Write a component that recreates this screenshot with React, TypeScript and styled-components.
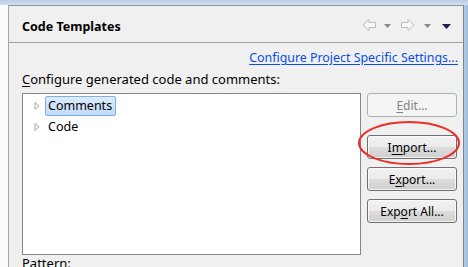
import React from "react";
import styled, { createGlobalStyle } from "styled-components";

const Global = createGlobalStyle`
  html, body { margin: 0; padding: 0; }
  body {
    width: 468px; height: 267px; overflow: hidden;
    font-family: "Segoe UI", "Noto Sans", "Open Sans", sans-serif;
    font-size: 12px; color: #000; background: #fafbfc;
  }
`;

const Frame = styled.div`
  width: 468px; height: 267px; display: flex; flex-direction: column; overflow: hidden;
`;
const TopStrip = styled.div`
  height: 5px; flex: none;
  background: linear-gradient(#b9cde3, #d3e0ee);
`;
const Body = styled.div`
  flex: 1; display: flex; min-height: 0;
`;
const LeftGutter = styled.div`
  width: 8px; flex: none; background: #fbfcfd;
`;
const RightStrip = styled.div`
  width: 4px; flex: none;
  background: linear-gradient(90deg, #b5cce6, #9fbcdc);
`;
const Panel = styled.div`
  flex: 1; display: flex; flex-direction: column; min-height: 0;
  background: #f0f0f0;
  border-left: 1px solid #a3a7ad;
  border-top: 1px solid #8d939b;
  border-right: 1px solid #7f858d;
`;
const Header = styled.div`
  height: 37px; flex: none; display: flex; align-items: center;
  padding: 4px 0 0 13px; box-sizing: border-box;
  border-bottom: 1px solid #a0a0a0;
`;
const Title = styled.div`
  font-weight: bold; font-size: 12.5px; flex: 1;
`;
const NavGroup = styled.div`
  display: flex; align-items: center; padding-right: 10px; margin-top: -2px;
`;
const NavIcon = styled.svg`
  display: block; flex: none;
`;
const Content = styled.div`
  flex: 1; display: flex; flex-direction: column; padding: 6px 5px 0 13px; min-height: 0;
`;
const LinkRow = styled.div`
  display: flex; justify-content: flex-end; height: 18px; align-items: center;
  font-size: 12.4px;
`;
const Link = styled.span`
  color: #0a4ee8; text-decoration: underline; text-underline-offset: 2px;
`;
const Label = styled.div`
  margin-top: 4px; height: 17px; display: flex; align-items: center; font-size: 13px;
`;
const Mn = styled.span`
  text-decoration: underline; text-underline-offset: 2px;
`;
const MainRow = styled.div`
  display: flex; gap: 6px; margin-top: 6px; align-items: flex-start;
`;
const Tree = styled.div`
  width: 339px; height: 162px; box-sizing: border-box; flex: none;
  background: #fff; border: 1px solid #828790; padding: 1px 0 0 9px;
`;
const TreeRow = styled.div`
  display: flex; align-items: center; height: 21px;
`;
const Twisty = styled.svg`
  width: 10px; height: 10px; margin-right: 3px; flex: none;
`;
const TreeText = styled.span<{ $sel?: boolean }>`
  padding: 0 3px 0 2px; height: 20px; line-height: 18px; box-sizing: border-box;
  border: 1px solid ${(p) => (p.$sel ? "#84acdd" : "transparent")};
  border-radius: 2px; font-size: 12.5px;
  background: ${(p) => (p.$sel ? "linear-gradient(#dcebfc, #c1dbfc)" : "transparent")};
`;
const Buttons = styled.div`
  position: relative; width: 90px; display: flex; flex-direction: column; gap: 8px;
`;
const Button = styled.div<{ $disabled?: boolean; $gapTop?: number }>`
  height: 24px; box-sizing: border-box; display: flex; align-items: center; justify-content: center;
  border: 1px solid ${(p) => (p.$disabled ? "#adb2b5" : "#707070")};
  border-radius: 3px;
  color: ${(p) => (p.$disabled ? "#838383" : "#000")};
  background: ${(p) =>
    p.$disabled
      ? "#f4f4f4"
      : "linear-gradient(#f2f2f2 0%, #ebebeb 49%, #dddddd 50%, #cfcfcf 100%)"};
  box-shadow: inset 0 0 0 1px ${(p) => (p.$disabled ? "transparent" : "rgba(255,255,255,0.7)")};
  margin-top: ${(p) => p.$gapTop ?? 0}px;
`;
const Ellipse = styled.svg`
  position: absolute; left: -10px; top: 26px; pointer-events: none;
`;
const BottomLabel = styled.div`
  margin-top: 0px; font-size: 13px; line-height: 16px;
`;

const Arrow = ({ dir }: { dir: "left" | "right" }) => (
  <NavIcon width="15" height="14" viewBox="0 0 15 14">
    <path
      d={
        dir === "left"
          ? "M1 7 L7 1.5 L7 4.5 L13.5 4.5 L13.5 9.5 L7 9.5 L7 12.5 Z"
          : "M14 7 L8 1.5 L8 4.5 L1.5 4.5 L1.5 9.5 L8 9.5 L8 12.5 Z"
      }
      fill="#f8f8f8"
      stroke="#bdbdbd"
      strokeWidth="1"
      strokeLinejoin="round"
    />
  </NavIcon>
);
const Drop = ({ color, w = 7, box, off }: { color: string; w?: number; box: number; off: number }) => (
  <NavIcon width={box} height="14" viewBox={`0 0 ${box} 14`}>
    <path d={`M${off} 6 L${off + w} 6 L${off + w / 2} ${6 + Math.ceil(w / 2)} Z`} fill={color} />
  </NavIcon>
);

const Tw = () => (
  <Twisty viewBox="0 0 10 10">
    <path d="M3 1.5 L7 5 L3 8.5 Z" fill="#fff" stroke="#a6a6a6" strokeWidth="1" strokeLinejoin="round" />
  </Twisty>
);

export default function App() {
  return (
    <Frame>
      <Global />
      <TopStrip />
      <Body>
        <LeftGutter />
        <Panel>
          <Header>
            <Title>Code Templates</Title>
            <NavGroup>
              <Arrow dir="left" />
              <Drop color="#8a8a8a" box={23} off={7} />
              <Arrow dir="right" />
              <Drop color="#8a8a8a" box={24} off={9} />
              <Drop color="#2b1450" w={9} box={14} off={3} />
            </NavGroup>
          </Header>
          <Content>
            <LinkRow>
              <Link>Configure Project Specific Settings...</Link>
            </LinkRow>
            <Label>
              <span>
                <Mn>C</Mn>onfigure generated code and comments:
              </span>
            </Label>
            <MainRow>
              <Tree>
                <TreeRow>
                  <Tw />
                  <TreeText $sel>Comments</TreeText>
                </TreeRow>
                <TreeRow>
                  <Tw />
                  <TreeText>Code</TreeText>
                </TreeRow>
              </Tree>
              <Buttons>
                <Button $disabled>
                  <span>
                    <Mn>E</Mn>dit...
                  </span>
                </Button>
                <Button $gapTop={10}>
                  <span>
                    I<Mn>m</Mn>port...
                  </span>
                </Button>
                <Button>
                  <span>
                    E<Mn>x</Mn>port...
                  </span>
                </Button>
                <Button>
                  <span>
                    Exp<Mn>o</Mn>rt All...
                  </span>
                </Button>
                <Ellipse width="104" height="48" viewBox="0 0 104 48">
                  <ellipse cx="52" cy="24" rx="50" ry="21" fill="none" stroke="#e8302c" strokeWidth="2" />
                </Ellipse>
              </Buttons>
            </MainRow>
            <BottomLabel>Pattern:</BottomLabel>
          </Content>
        </Panel>
        <RightStrip />
      </Body>
    </Frame>
  );
}
